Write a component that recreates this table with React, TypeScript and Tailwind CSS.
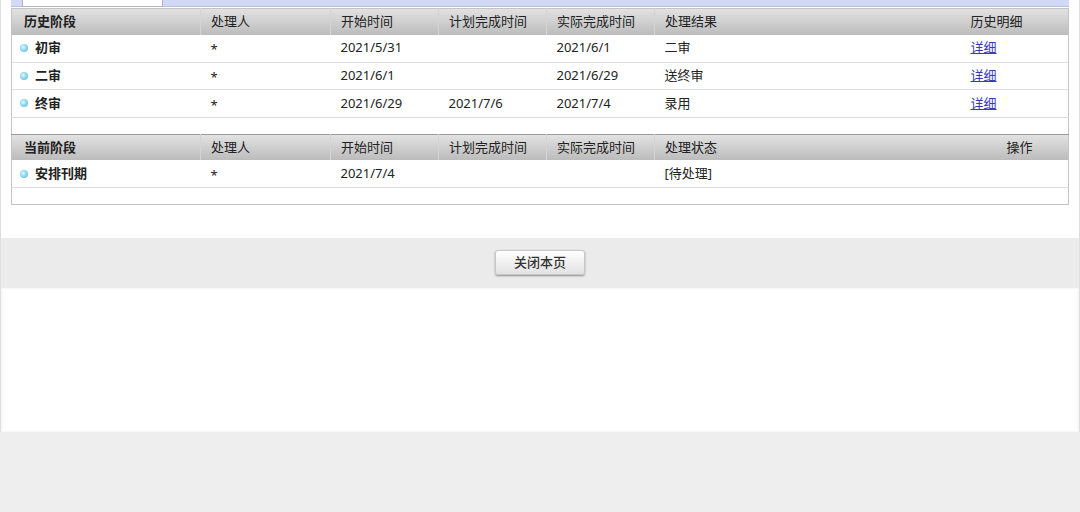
import React from "react";

const font = { fontFamily: '"Noto Sans", "Noto Sans CJK SC", sans-serif' };

const widths = [189, 130, 108, 108, 108, 306, 108];

function Bullet() {
  return (
    <span className="inline-block w-[8px] h-[8px] rounded-full mr-[7px] bg-[radial-gradient(circle_at_40%_40%,#e6f9ff_0%,#8fd8ee_45%,#4cb4d8_100%)]" />
  );
}

function HeaderRow({ cells, dark }: { cells: string[]; dark?: boolean }) {
  return (
    <tr
      className={`h-[26px] bg-gradient-to-b from-[#e2e2e2] to-[#bcbcbc] ${
        dark ? "border-t border-[#9a9a9a]" : ""
      }`}
    >
      {cells.map((c, i) => (
        <th
          key={i}
          className={`text-left text-[13px] text-[#222] align-middle ${
            i === 0 ? "pl-3 font-bold" : "pl-[10px] font-normal"
          } ${i > 0 && i < 6 ? "border-l border-[#d4d4d4]" : ""} ${
            dark && i === 6 ? "pl-[46px]" : ""
          }`}
        >
          {c}
        </th>
      ))}
    </tr>
  );
}

function DataRow({ cells, link }: { cells: string[]; link?: boolean }) {
  return (
    <tr className="h-[27.5px] border-b border-[#dcdcdc] bg-white">
      {cells.map((c, i) => (
        <td
          key={i}
          className={`text-[13px] text-[#222] align-middle ${i === 0 ? "pl-[8px] font-bold" : "pl-[10px]"}`}
        >
          {i === 0 ? (
            <span className="flex items-center">
              <Bullet />
              {c}
            </span>
          ) : i === 1 ? (
            <span className="relative top-[2px]">{c}</span>
          ) : i === 6 && link && c ? (
            <a className="text-[#3a3ab8] underline">{c}</a>
          ) : (
            c
          )}
        </td>
      ))}
    </tr>
  );
}

export default function App() {
  return (
    <div className="w-[1080px] h-[512px] bg-[#eeeeee] overflow-hidden" style={font}>
      <div className="h-[432px] bg-white border-x border-[#dedede] flex flex-col">
        <div className="pl-[10px]">
          <div className="flex h-[7px] w-[1058px] border-b border-[#b8bfd8] bg-[#d2d9f7]">
            <div className="w-[11px]" />
            <div className="w-[141px] h-[7px] bg-white border-x border-b border-[#b5b5b5]" />
            <div className="flex-1" />
          </div>
          <div className="h-[1px]" />
          <table className="table-fixed border-collapse w-[1058px] border border-[#c4c4c4]">
            <colgroup>
              {widths.map((w, i) => (
                <col key={i} style={{ width: w }} />
              ))}
            </colgroup>
            <tbody>
              <HeaderRow cells={["历史阶段", "处理人", "开始时间", "计划完成时间", "实际完成时间", "处理结果", "历史明细"]} />
              <DataRow cells={["初审", "*", "2021/5/31", "", "2021/6/1", "二审", "详细"]} link />
              <DataRow cells={["二审", "*", "2021/6/1", "", "2021/6/29", "送终审", "详细"]} link />
              <DataRow cells={["终审", "*", "2021/6/29", "2021/7/6", "2021/7/4", "录用", "详细"]} link />
              <tr className="h-[17px]">
                <td colSpan={7} />
              </tr>
              <HeaderRow dark cells={["当前阶段", "处理人", "开始时间", "计划完成时间", "实际完成时间", "处理状态", "操作"]} />
              <DataRow cells={["安排刊期", "*", "2021/7/4", "", "", "[待处理]", ""]} />
              <tr className="h-[17px]">
                <td colSpan={7} />
              </tr>
            </tbody>
          </table>
        </div>
        <div className="h-[33px]" />
        <div className="h-[50px] bg-[#ebebeb] flex items-center justify-center">
          <button className="w-[90px] h-[25px] rounded-[3px] border border-[#c8c8c8] bg-gradient-to-b from-white to-[#e2e2e2] shadow-[0_1px_2px_rgba(0,0,0,0.4)] text-[13px] font-medium text-[#333] mb-[1px]">
            关闭本页
          </button>
        </div>
        <div className="flex-1 shadow-[inset_2px_0_3px_rgba(0,0,0,0.04),inset_-2px_0_3px_rgba(0,0,0,0.04)]" />
      </div>
    </div>
  );
}
